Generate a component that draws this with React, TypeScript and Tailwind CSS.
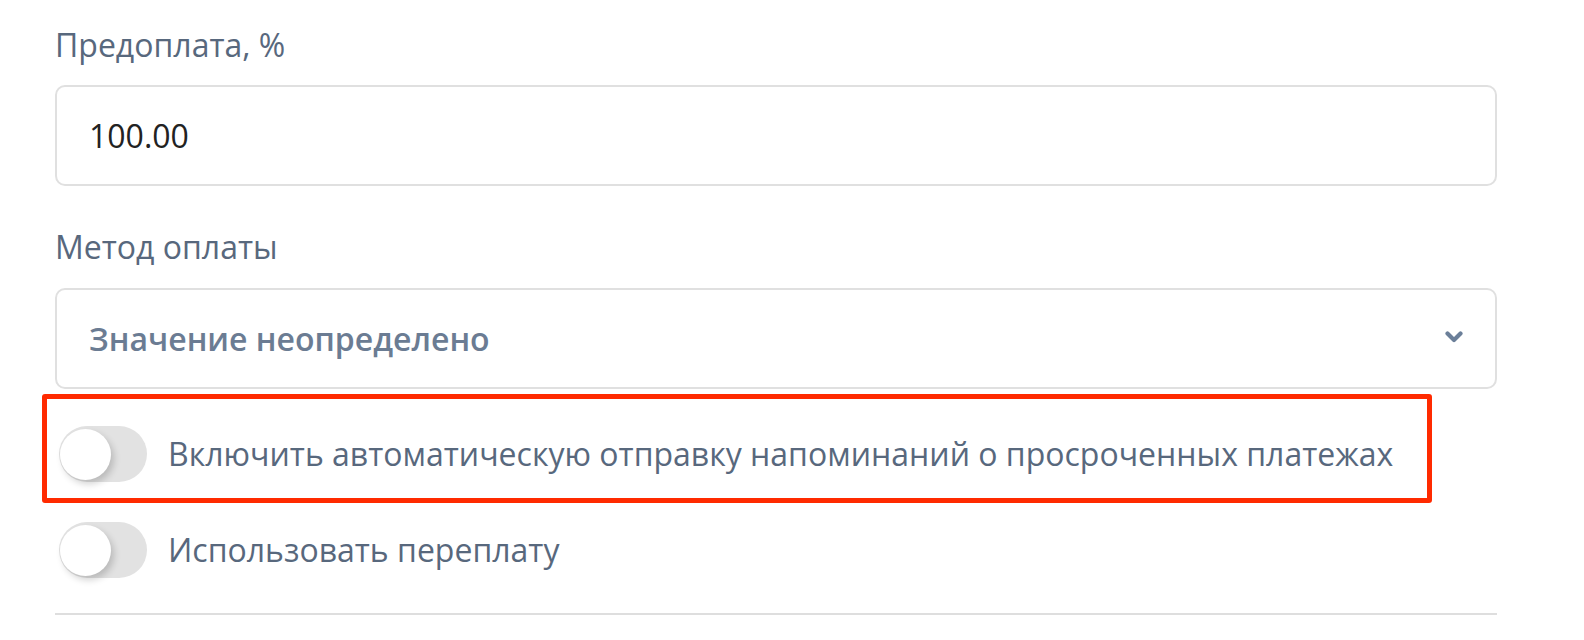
import React from 'react';

const font = { fontFamily: '"Open Sans", "Noto Sans", sans-serif' };

function Toggle() {
    return (
        <div className="relative ml-[4px] w-[88px] h-[56px] shrink-0 rounded-full bg-[#e2e2e2]">
            <div className="absolute left-[1px] top-[3px] w-[51px] h-[51px] rounded-full bg-white shadow-[3px_4px_7px_rgba(0,0,0,0.18)]" />
        </div>
    );
}

function ToggleRow({ label, highlighted }: { label: string; highlighted?: boolean }) {
    return (
        <div className="relative flex items-center gap-[21px] h-[96px]">
            <Toggle />
            <span className="text-[32px] leading-none text-[#58687d]">{label}</span>
            {highlighted && (
                <div className="absolute -left-[13px] -top-[12px] right-[65px] -bottom-[1px] border-[5px] border-[#ff2a00] rounded-[3px] pointer-events-none" />
            )}
        </div>
    );
}

export default function App() {
    return (
        <div className="min-h-[640px] bg-white" style={font}>
            <div className="w-[1497px] pl-[55px] pt-[19px]">
                {/* Prepayment */}
                <div className="text-[32px] leading-[51px] text-[#58687d]">Предоплата, %</div>
                <div className="mt-[15px] h-[101px] flex items-center px-[32px] border-2 border-[#e0e0e0] rounded-[10px]">
                    <span className="text-[32px] text-[#222]">100.00</span>
                </div>

                {/* Payment method */}
                <div className="mt-[35px] text-[32px] leading-[51px] text-[#58687d]">Метод оплаты</div>
                <div className="mt-[16px] h-[101px] flex items-center justify-between pl-[32px] pr-[32px] border-2 border-[#e0e0e0] rounded-[10px]">
                    <span className="text-[32px] font-semibold text-[#6b7c93]">Значение неопределено</span>
                    <svg width="18" height="12" viewBox="0 0 18 12" className="mt-[-4px]">
                        <path d="M2.5 2.5 L9 9 L15.5 2.5" fill="none" stroke="#6b7f99" strokeWidth="4.2" strokeLinecap="round" strokeLinejoin="round" />
                    </svg>
                </div>

                {/* Switches */}
                <div className="mt-[17px]">
                    <ToggleRow label="Включить автоматическую отправку напоминаний о просроченных платежах" highlighted />
                    <ToggleRow label="Использовать переплату" />
                </div>

                <div className="mt-[15px] border-t-2 border-[#dedede]" />
            </div>
        </div>
    );
}
